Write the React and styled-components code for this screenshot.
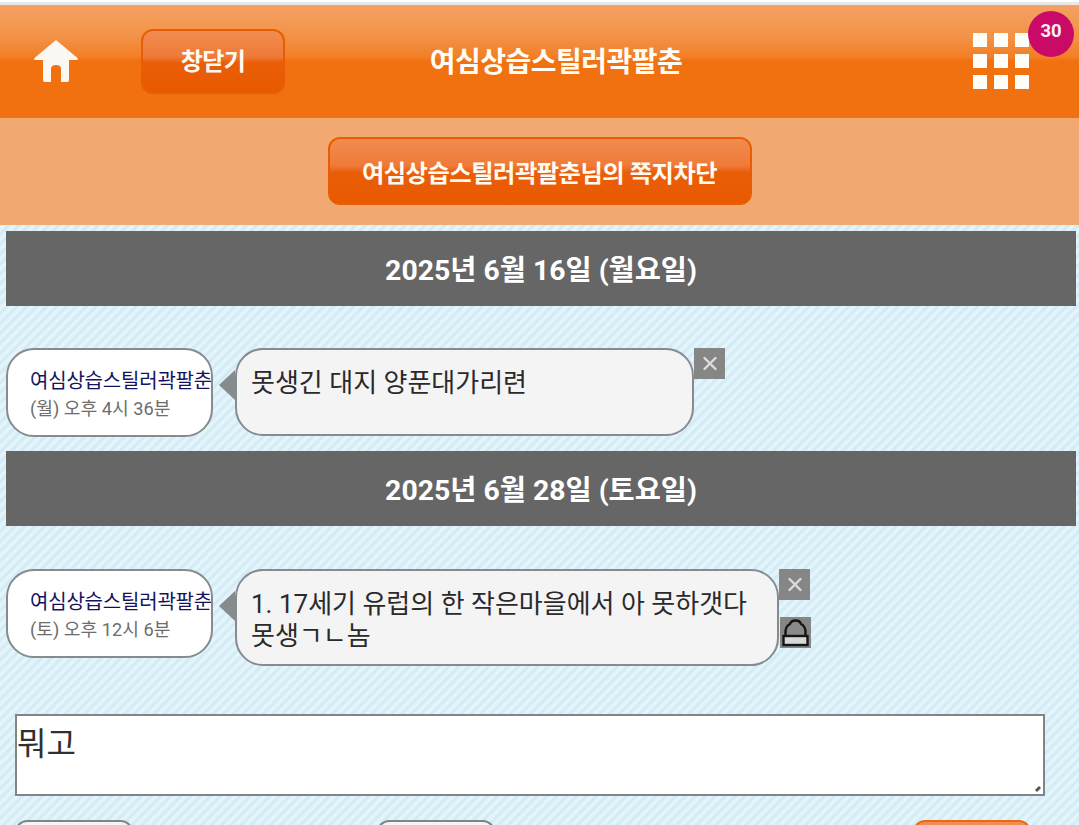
import React from "react";
import styled, { createGlobalStyle } from "styled-components";

const FONT = `Roboto, "Noto Sans CJK KR", "Liberation Sans", sans-serif`;

const GlobalStyle = createGlobalStyle`
  html, body {
    margin: 0;
    padding: 0;
    height: 825px;
    overflow: hidden;
    background: #fff;
  }
  * { box-sizing: border-box; }
`;

const Page = styled.div`
  width: 1079px;
  height: 825px;
  overflow: hidden;
  font-family: ${FONT};
  background-color: #daf0f8;
  background-image: repeating-linear-gradient(
    135deg,
    #e3f4fa 0,
    #e3f4fa 2.5px,
    #d3ebf5 4px,
    #d3ebf5 5.5px,
    #e3f4fa 7px
  );
`;

const TopLine = styled.div`
  height: 5px;
  background: linear-gradient(to bottom, #fff 0, #fff 2px, #e8e8e8 2px);
`;

const Header = styled.header`
  height: 113px;
  padding: 24px 0 0 34px;
  display: flex;
  align-items: flex-start;
  position: relative;
  background: linear-gradient(
    to bottom,
    #f4a162 0,
    #f39349 30px,
    #f27f26 52px,
    #f1700f 56px,
    #f1700f 100%
  );
`;

const Title = styled.div`
  position: absolute;
  left: 33px;
  right: 0;
  top: 42px;
  text-align: center;
  color: #fffdf8;
  font-size: 28px;
  line-height: 32px;
  font-weight: 700;
  letter-spacing: -0.5px;
`;

const GlossButton = styled.button`
  width: ${(p) => p.$width}px;
  height: ${(p) => p.$height}px;
  margin: 0;
  padding: 0;
  border: 2px solid #e85d04;
  border-radius: 12px;
  color: #fffaf2;
  font-family: ${FONT};
  font-size: ${(p) => p.$size}px;
  font-weight: 700;
  letter-spacing: -0.5px;
  background: linear-gradient(
    to bottom,
    #f28c50 0,
    #ee7a38 42%,
    #e95e08 52%,
    #e95a00 100%
  );
`;

const CloseButton = styled(GlossButton)`
  margin-left: 63px;
  padding-bottom: 5px;
`;

const HomeGlyph = styled.svg`
  margin-top: 11px;
  flex: none;
`;

const GridIcon = styled.div`
  position: absolute;
  left: 973px;
  top: 28px;
  display: grid;
  grid-template-columns: repeat(3, 14px);
  grid-auto-rows: 14px;
  gap: 7px;
`;

const GridCell = styled.span`
  background: #fffdf8;
`;

const Badge = styled.div`
  position: absolute;
  left: 1028px;
  top: 6px;
  width: 46px;
  height: 46px;
  border-radius: 50%;
  background: #c90b67;
  color: #fbeef4;
  font-size: 18.5px;
  font-weight: 700;
  line-height: 40px;
  text-align: center;
`;

const SubBar = styled.div`
  height: 107px;
  padding-top: 19px;
  display: flex;
  justify-content: center;
  background: #f2a971;
`;

const DateBar = styled.div`
  height: 75px;
  margin: ${(p) => p.$top}px 3px 0 6px;
  background: #666;
  color: #fff;
  font-size: 28.4px;
  font-weight: 700;
  line-height: 80px;
  text-align: center;
`;

const MessageRow = styled.div`
  display: flex;
  align-items: flex-start;
  margin: ${(p) => p.$top}px 0 0 6px;
`;

const Sender = styled.div`
  width: 207px;
  height: 89px;
  flex: none;
  padding: 17px 0 0 22px;
  background: #fff;
  border: 2px solid #868b8e;
  border-radius: 28px;
  white-space: nowrap;
  overflow: hidden;
`;

const SenderName = styled.div`
  color: #14145e;
  font-size: 20px;
  line-height: 28px;
  letter-spacing: -0.2px;
`;

const SentAt = styled.div`
  margin-top: 1px;
  color: #6d6d6d;
  font-size: 18.2px;
  line-height: 26px;
`;

const Bubble = styled.div`
  position: relative;
  width: ${(p) => p.$width}px;
  min-height: ${(p) => p.$height}px;
  margin-left: 22px;
  padding: 17px 14px 0;
  background: #f4f4f4;
  border: 2px solid #868b8e;
  border-radius: 28px;
  color: #2a2a2a;
  font-size: 26px;
  line-height: 32px;

  &::before {
    content: "";
    position: absolute;
    left: -18px;
    top: 20px;
    border-style: solid;
    border-width: 15px 16px 15px 0;
    border-color: transparent #868b8e transparent transparent;
  }
`;

const BubbleActions = styled.div`
  display: flex;
  flex-direction: column;
  gap: 17px;
`;

const IconBox = styled.button`
  display: block;
  width: 31px;
  height: 31px;
  margin: 0 0 0 ${(p) => p.$shift || 0}px;
  padding: 0;
  border: 0;
  background: #868686;
`;

const Composer = styled.div`
  position: relative;
  height: 82px;
  margin: 48px 34px 0 15px;
  background: #fff;
  border: 2px solid #808688;
  color: #303030;
  font-size: 32px;
  line-height: 56px;
  padding: 0;
`;

const ResizeGrip = styled.svg`
  position: absolute;
  right: 0;
  bottom: 1px;
`;

const FooterRow = styled.div`
  margin-top: 24px;
  padding: 0 48px 0 15px;
  display: flex;
  gap: 244px;
`;

const FooterButton = styled.div`
  width: 118px;
  height: 40px;
  flex: none;
  margin-left: ${(p) => (p.$primary ? "auto" : "0")};
  border: 2px solid ${(p) => (p.$primary ? "#e8691c" : "#808688")};
  border-radius: 12px;
  background: ${(p) => (p.$primary ? "#f28c50" : "#f4f4f4")};
`;

function HomeIcon() {
  return (
    <HomeGlyph width="44" height="43" viewBox="0 0 44 43" aria-hidden="true">
      <path
        d="M22 0 L43.5 18 Q44.5 20 42.5 20 L35 20 L35 40 Q35 42 33 42 L27 42 L27 29 Q27 25 22 25 Q17 25 17 29 L17 42 L11 42 Q9 42 9 40 L9 20 L1.5 20 Q-0.5 20 0.5 18 Z"
        fill="#fbf8f4"
      />
    </HomeGlyph>
  );
}

function CloseIcon() {
  return (
    <svg width="30" height="31" viewBox="0 0 30 31" aria-hidden="true">
      <path
        d="M9.5 10 L20.5 21 M20.5 10 L9.5 21"
        stroke="#dcdcdc"
        strokeWidth="2.4"
        strokeLinecap="round"
      />
    </svg>
  );
}

function StampIcon() {
  return (
    <svg width="31" height="31" viewBox="0 0 31 31" aria-hidden="true">
      <path
        d="M5.5 19 L5.5 14 Q6 9 10 7 Q11 3.5 15.5 3.5 Q20 3.5 21 7 Q25 9 25.5 14 L25.5 19"
        fill="#8a8a8a"
        stroke="#151515"
        strokeWidth="2.4"
      />
      <rect x="3.5" y="19" width="24" height="9" fill="#d8d8d8" stroke="#151515" strokeWidth="2.4" />
    </svg>
  );
}

export default function App() {
  return (
    <Page>
      <GlobalStyle />
      <TopLine />
      <Header>
        <HomeIcon />
        <CloseButton $width={144} $height={65} $size={24}>
          창닫기
        </CloseButton>
        <Title>여심상습스틸러곽팔춘</Title>
        <GridIcon>
          {Array.from({ length: 9 }, (_, i) => (
            <GridCell key={i} />
          ))}
        </GridIcon>
        <Badge>30</Badge>
      </Header>
      <SubBar>
        <GlossButton $width={424} $height={68} $size={24.3}>
          여심상습스틸러곽팔춘님의 쪽지차단
        </GlossButton>
      </SubBar>

      <DateBar $top={6}>2025년 6월 16일 (월요일)</DateBar>
      <MessageRow $top={42}>
        <Sender>
          <SenderName>여심상습스틸러곽팔춘</SenderName>
          <SentAt>(월) 오후 4시 36분</SentAt>
        </Sender>
        <Bubble $width={459} $height={88}>
          못생긴 대지 양푼대가리련
        </Bubble>
        <BubbleActions>
          <IconBox>
            <CloseIcon />
          </IconBox>
        </BubbleActions>
      </MessageRow>

      <DateBar $top={14}>2025년 6월 28일 (토요일)</DateBar>
      <MessageRow $top={43}>
        <Sender>
          <SenderName>여심상습스틸러곽팔춘</SenderName>
          <SentAt>(토) 오후 12시 6분</SentAt>
        </Sender>
        <Bubble $width={544} $height={97}>
          1. 17세기 유럽의 한 작은마을에서 아 못하갯다
          <br />
          못생ㄱㄴ놈
        </Bubble>
        <BubbleActions>
          <IconBox>
            <CloseIcon />
          </IconBox>
          <IconBox $shift={1}>
            <StampIcon />
          </IconBox>
        </BubbleActions>
      </MessageRow>

      <Composer>
        뭐고
        <ResizeGrip width="10" height="10" viewBox="0 0 10 10" aria-hidden="true">
          <path d="M3 8 L7 4" stroke="#555" strokeWidth="3" />
        </ResizeGrip>
      </Composer>
      <FooterRow>
        <FooterButton />
        <FooterButton />
        <FooterButton $primary />
      </FooterRow>
    </Page>
  );
}
